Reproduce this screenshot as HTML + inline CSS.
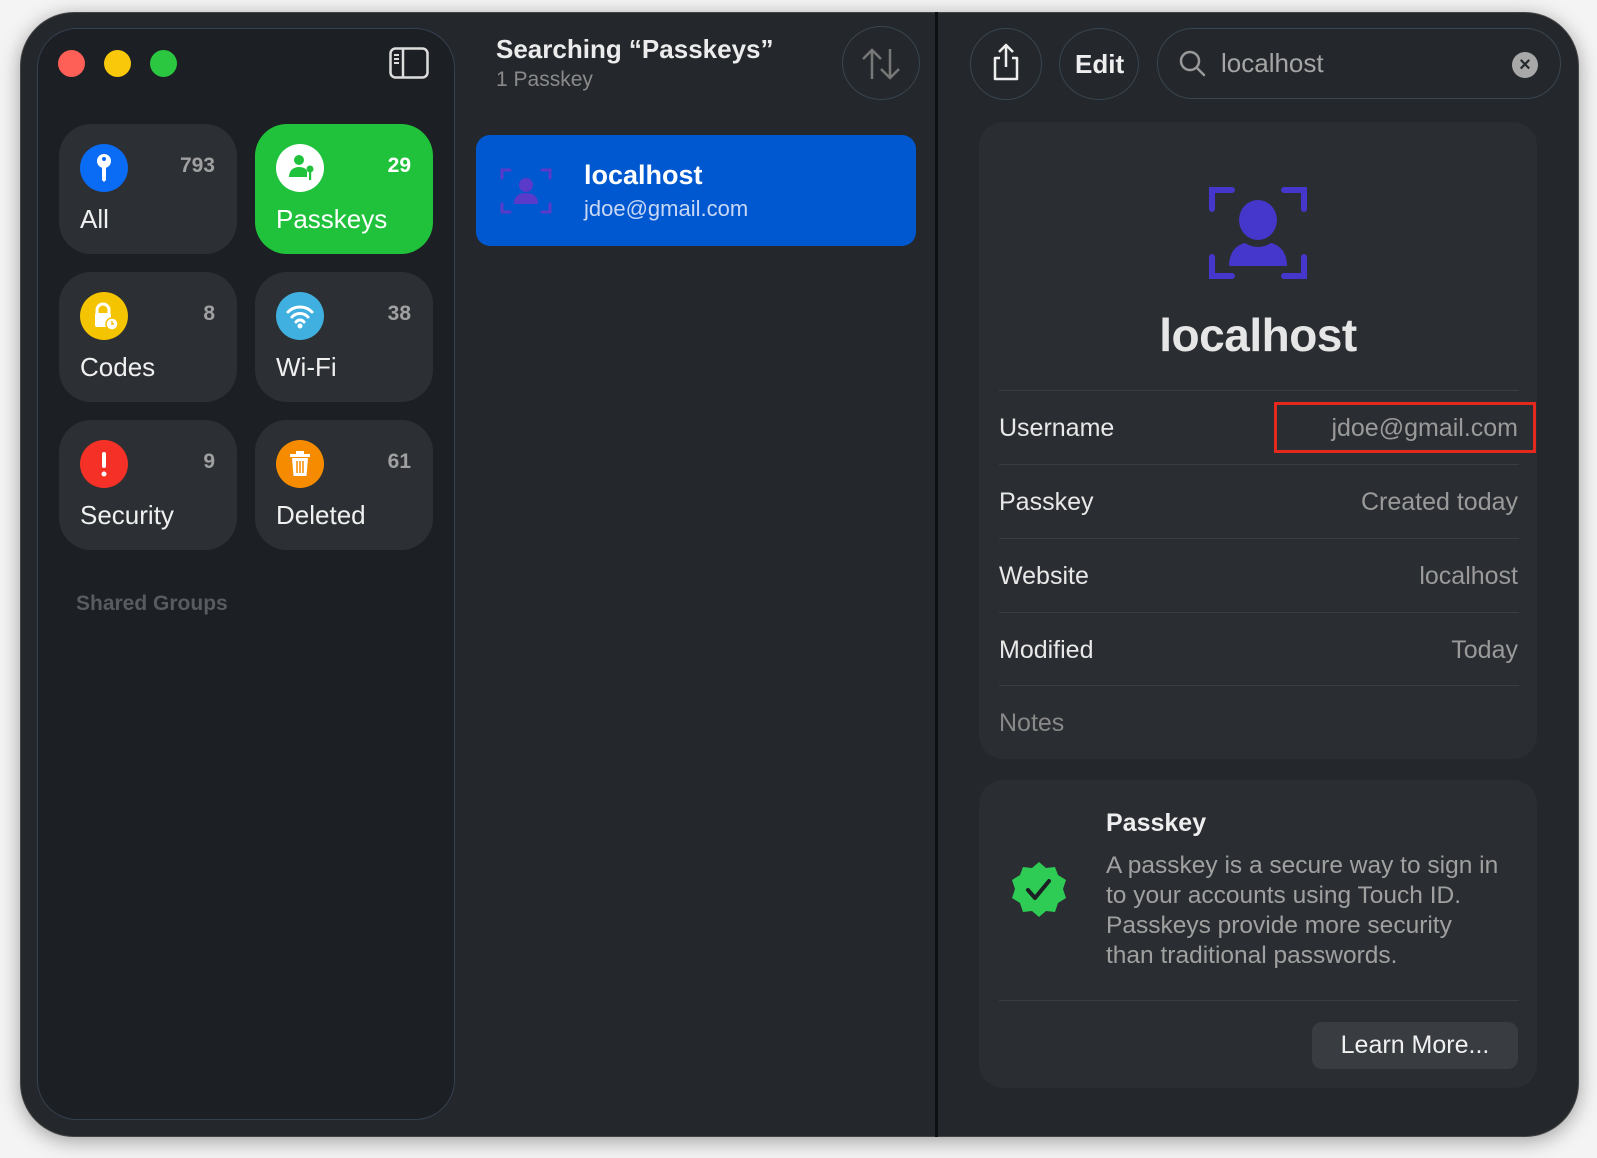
<!DOCTYPE html>
<html><head><meta charset="utf-8"><style>
*{margin:0;padding:0;box-sizing:border-box}
body{width:1597px;height:1158px;background:#f4f4f4;font-family:"Liberation Sans",sans-serif;position:relative;overflow:hidden}
.a{position:absolute}
.win{left:20px;top:12px;width:1559px;height:1125px;border-radius:54px;background:#24282c;box-shadow:0 4px 20px rgba(0,0,0,.35);border:1.5px solid #444;overflow:hidden}
.side{left:37px;top:28px;width:418px;height:1092px;border-radius:40px;background:#1c1f23;border:1.5px solid #354050}
.tile{width:178px;height:130px;border-radius:32px;background:#2c3034}
.ic{left:21px;top:20px;width:48px;height:48px;border-radius:50%}
.cnt{right:22px;top:30px;font-size:21px;font-weight:bold;color:#a0a0a0}
.lbl{left:21px;top:80px;font-size:26px;color:#f0f0f0}
.card{background:#2a2d31;border-radius:24px}
.row{left:999px;width:520px;height:1px;background:#3a3d41}
.rl{left:999px;font-size:25px;color:#e8e8e8}
.rv{right:79px;font-size:25px;color:#9a9a9a;text-align:right}
.circ{border-radius:50%;border:1.5px solid #394550}
</style></head><body>
<div class="a win"></div>
<div class="a side"></div>
<div class="a" style="left:58px;top:50px;width:27px;height:27px;border-radius:50%;background:#fe5f57"></div>
<div class="a" style="left:104px;top:50px;width:27px;height:27px;border-radius:50%;background:#f9c80a"></div>
<div class="a" style="left:150px;top:50px;width:27px;height:27px;border-radius:50%;background:#2bc740"></div>
<svg class="a" style="left:389px;top:47px" width="40" height="32" viewBox="0 0 40 32"><rect x="1.5" y="1.5" width="37" height="29" rx="5" fill="none" stroke="#ddd" stroke-width="2.5"/><line x1="14" y1="2" x2="14" y2="30" stroke="#ddd" stroke-width="2.5"/><path d="M5 8h5M5 12h5M5 16h5" stroke="#ddd" stroke-width="2"/></svg>

<div class="a tile" style="left:59px;top:124px"><div class="a ic" style="background:#0a6cf5"><svg width="48" height="48"><circle cx="24" cy="17" r="7" fill="#fff"/><circle cx="24" cy="15" r="2" fill="#0a6cf5"/><path d="M22 22h4v14l-2 2-2-2z" fill="#fff"/></svg></div><div class="a cnt">793</div><div class="a lbl">All</div></div>
<div class="a tile" style="left:255px;top:124px;background:#1fc23a"><div class="a ic" style="background:#fff"><svg width="48" height="48"><circle cx="23" cy="16" r="5" fill="#1fc23a"/><path d="M13 33c0-7 5-10 10-10s7 2 8 4v6z" fill="#1fc23a"/><circle cx="34" cy="25" r="3.5" fill="#1fc23a"/><rect x="33" y="27" width="2.2" height="9" fill="#1fc23a"/></svg></div><div class="a cnt" style="color:#fff">29</div><div class="a lbl" style="color:#fff">Passkeys</div></div>

<div class="a tile" style="left:59px;top:272px"><div class="a ic" style="background:#f5c400"><svg width="48" height="48"><path d="M17 22v-4a6 6 0 0 1 12 0v4" fill="none" stroke="#fff" stroke-width="3"/><rect x="15" y="21" width="16" height="14" rx="2" fill="#fff"/><circle cx="32" cy="32" r="6" fill="#fff" stroke="#f5c400" stroke-width="1.5"/><path d="M32 29v3h2" stroke="#f5c400" stroke-width="1.5" fill="none"/></svg></div><div class="a cnt">8</div><div class="a lbl">Codes</div></div>
<div class="a tile" style="left:255px;top:272px"><div class="a ic" style="background:#40b0e0"><svg width="48" height="48"><path d="M12 20a17 17 0 0 1 24 0M16 25a11 11 0 0 1 16 0M20 30a5 5 0 0 1 8 0" fill="none" stroke="#fff" stroke-width="3" stroke-linecap="round"/><circle cx="24" cy="34" r="2.5" fill="#fff"/></svg></div><div class="a cnt">38</div><div class="a lbl">Wi-Fi</div></div>

<div class="a tile" style="left:59px;top:420px"><div class="a ic" style="background:#f53027"><svg width="48" height="48"><rect x="22" y="12" width="4" height="16" rx="2" fill="#fff"/><circle cx="24" cy="34" r="2.5" fill="#fff"/></svg></div><div class="a cnt">9</div><div class="a lbl">Security</div></div>
<div class="a tile" style="left:255px;top:420px"><div class="a ic" style="background:#f78b00"><svg width="48" height="48"><rect x="14" y="14" width="20" height="3" fill="#fff"/><rect x="20" y="11" width="8" height="3" fill="#fff"/><path d="M16 18h16l-1.5 18h-13z" fill="#fff"/><path d="M21 21v12M24 21v12M27 21v12" stroke="#f78b00" stroke-width="1.5"/></svg></div><div class="a cnt">61</div><div class="a lbl">Deleted</div></div>

<div class="a" style="left:76px;top:592px;font-size:21px;font-weight:bold;color:#585c61">Shared Groups</div>

<div class="a" style="left:496px;top:34px;font-size:26px;font-weight:bold;color:#ececec">Searching “Passkeys”</div>
<div class="a" style="left:496px;top:68px;font-size:21px;color:#8a8a8a">1 Passkey</div>
<div class="a circ" style="left:842px;top:26px;width:78px;height:74px"></div>
<svg class="a" style="left:860px;top:46px" width="42" height="36"><path d="M12 33V4M3 13l9-9 9 9M30 3v29M21 23l9 9 9-9" fill="none" stroke="#777" stroke-width="2.5"/></svg>

<div class="a" style="left:476px;top:135px;width:440px;height:111px;border-radius:14px;background:#0058d0"></div>
<svg class="a" style="left:500px;top:166px" width="52" height="50"><g fill="none" stroke="#5a3ac8" stroke-width="3" stroke-linecap="round"><path d="M2 12V4h8M42 4h8v8M50 38v8h-8M10 46H2v-8"/></g><circle cx="26" cy="19" r="7" fill="#5a3ac8"/><path d="M14 38c0-8 5-11 12-11s12 3 12 11z" fill="#5a3ac8"/></svg>
<div class="a" style="left:584px;top:160px;font-size:27px;font-weight:bold;color:#fff">localhost</div>
<div class="a" style="left:584px;top:196px;font-size:22px;color:#c8d8f5">jdoe@gmail.com</div>

<div class="a" style="left:935px;top:12px;width:3px;height:1125px;background:#0d0f11"></div>

<div class="a circ" style="left:970px;top:28px;width:72px;height:72px"></div>
<svg class="a" style="left:990px;top:42px" width="32" height="40"><path d="M16 25V3M9 10l7-7 7 7M10 16H5v21h22V16h-5" fill="none" stroke="#eee" stroke-width="2.5" stroke-linejoin="round"/></svg>
<div class="a circ" style="left:1059px;top:28px;width:80px;height:72px"></div>
<div class="a" style="left:1075px;top:49px;font-size:26px;font-weight:bold;color:#eee">Edit</div>
<div class="a" style="left:1157px;top:28px;width:404px;height:71px;border-radius:36px;border:1.5px solid #394550"></div>
<svg class="a" style="left:1178px;top:49px" width="30" height="30"><circle cx="12" cy="12" r="9" fill="none" stroke="#999" stroke-width="2.5"/><path d="M19 19l7 7" stroke="#999" stroke-width="2.5" stroke-linecap="round"/></svg>
<div class="a" style="left:1221px;top:48px;font-size:26px;color:#a5a5a5">localhost</div>
<div class="a" style="left:1512px;top:52px;width:26px;height:26px;border-radius:50%;background:#a8a8a8;color:#24282c;font-size:20px;font-weight:bold;text-align:center;line-height:26px">×</div>

<div class="a card" style="left:979px;top:122px;width:558px;height:637px"></div>
<svg class="a" style="left:1209px;top:184px" width="98" height="98"><g fill="none" stroke="#4536cc" stroke-width="6" stroke-linecap="round"><path d="M3 25V6h20M75 6h20v19M95 73v19H75M23 92H3V73"/></g><ellipse cx="49" cy="36" rx="19" ry="20" fill="#4536cc"/><path d="M20 82c0-16 10-22 16-23q13 8 26 0c6 1 16 7 16 23z" fill="#4536cc"/></svg>
<div class="a" style="left:979px;top:308px;width:558px;text-align:center;font-size:46px;font-weight:bold;color:#e6e6e6;letter-spacing:-0.5px">localhost</div>

<div class="a row" style="top:390px"></div>
<div class="a rl" style="top:414px">Username</div>
<div class="a rv" style="top:414px">jdoe@gmail.com</div>
<div class="a" style="left:1274px;top:402px;width:262px;height:51px;border:3px solid #e5281c"></div>
<div class="a row" style="top:464px"></div>
<div class="a rl" style="top:488px">Passkey</div>
<div class="a rv" style="top:488px">Created today</div>
<div class="a row" style="top:538px"></div>
<div class="a rl" style="top:562px">Website</div>
<div class="a rv" style="top:562px">localhost</div>
<div class="a row" style="top:612px"></div>
<div class="a rl" style="top:636px">Modified</div>
<div class="a rv" style="top:636px">Today</div>
<div class="a row" style="top:685px"></div>
<div class="a rl" style="top:709px;color:#888">Notes</div>

<div class="a card" style="left:979px;top:780px;width:558px;height:308px"></div>
<svg class="a" style="left:1009px;top:860px" width="60" height="60" viewBox="0 0 60 60"><polygon fill="#2ecc55" points="30,2 37,8 46,7 49,15 57,20 54,29 57,38 49,43 46,52 37,51 30,57 23,51 14,52 11,43 3,38 6,29 3,20 11,15 14,7 23,8"/><path d="M19 30l7 8 14-17" fill="none" stroke="#1c1f23" stroke-width="4" stroke-linecap="round" stroke-linejoin="round"/></svg>
<div class="a" style="left:1106px;top:809px;font-size:25px;font-weight:bold;color:#eee">Passkey</div>
<div class="a" style="left:1106px;top:851px;font-size:24.5px;line-height:30px;color:#a0a0a0;width:430px">A passkey is a secure way to sign in<br>to your accounts using Touch ID.<br>Passkeys provide more security<br>than traditional passwords.</div>
<div class="a row" style="top:1000px"></div>
<div class="a" style="left:1312px;top:1022px;width:206px;height:47px;border-radius:10px;background:#393c40;color:#f0f0f0;font-size:25px;text-align:center;line-height:47px">Learn More...</div>
</body></html>
